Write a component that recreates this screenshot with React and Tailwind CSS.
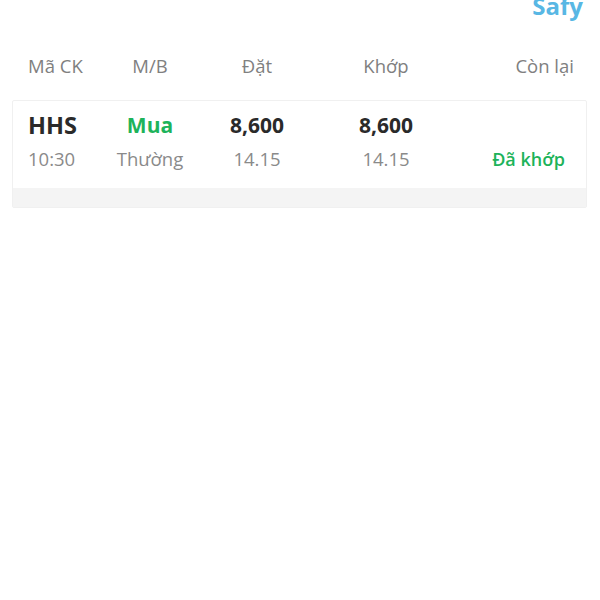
export default function App() {
  const font = { fontFamily: '"Open Sans", "Noto Sans", sans-serif' };
  return (
    <div className="w-[600px] h-[600px] bg-white overflow-hidden" style={font}>
      <div className="h-[22px] overflow-hidden flex justify-end pr-[17px]">
        <span className="text-[24px] font-bold leading-[24px] -mt-[6px] text-[#58b7e4]">Safy</span>
      </div>
      <div className="flex items-start h-[78px] pt-[30px] pl-[28px] pr-[26px] text-[18.5px] leading-[28px] text-[#808080]">
        <div className="w-[80px]">Mã CK</div>
        <div className="w-[84px] text-center">M/B</div>
        <div className="w-[130px] text-center">Đặt</div>
        <div className="w-[128px] text-center">Khớp</div>
        <div className="flex-1 text-right">Còn lại</div>
      </div>
      <div className="mx-[12px] w-[575px] border border-[#f0f0f0] rounded-[2px]">
        <div className="px-[15px] pt-[13px] pb-[17px]">
          <div className="flex items-center h-[24px] text-[21px] font-bold text-[#2a2a2a]">
            <div className="w-[80px] text-[23.5px]">HHS</div>
            <div className="w-[84px] text-center text-[#1db35a]">Mua</div>
            <div className="w-[130px] text-center">8,600</div>
            <div className="w-[128px] text-center">8,600</div>
            <div className="flex-1"></div>
          </div>
          <div className="flex items-center h-[24px] mt-[9px] text-[18.5px] text-[#8a8a8a]">
            <div className="w-[80px]">10:30</div>
            <div className="w-[84px] text-center">Thường</div>
            <div className="w-[130px] text-center">14.15</div>
            <div className="w-[128px] text-center">14.15</div>
            <div className="flex-1 text-right pr-[6px] text-[18px] font-semibold text-[#1db35a]">Đã khớp</div>
          </div>
        </div>
        <div className="h-[19px] bg-[#f4f4f4]"></div>
      </div>
    </div>
  );
}
